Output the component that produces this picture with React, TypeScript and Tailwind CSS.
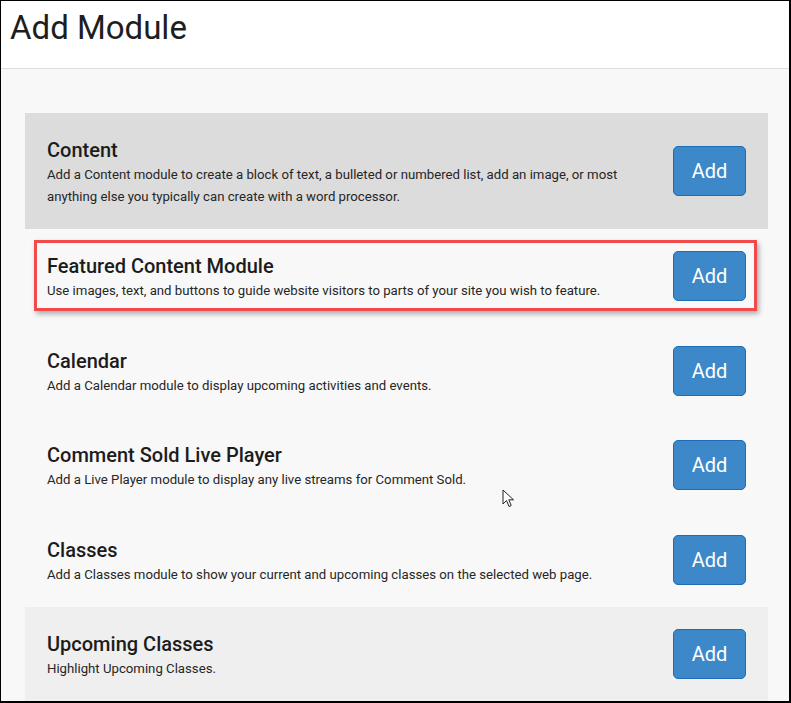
import React from "react";

type Mod = { title: string; desc: React.ReactNode; bg: string; highlight?: boolean };

const mods: Mod[] = [
  {
    title: "Content",
    desc: (
      <>
        Add a Content module to create a block of text, a bulleted or numbered list, add an image, or most
        <br />
        anything else you typically can create with a word processor.
      </>
    ),
    bg: "bg-[#dcdcdc]",
  },
  {
    title: "Featured Content Module",
    desc: "Use images, text, and buttons to guide website visitors to parts of your site you wish to feature.",
    bg: "bg-[#f8f8f8]",
    highlight: true,
  },
  { title: "Calendar", desc: "Add a Calendar module to display upcoming activities and events.", bg: "bg-[#f8f8f8]" },
  {
    title: "Comment Sold Live Player",
    desc: "Add a Live Player module to display any live streams for Comment Sold.",
    bg: "bg-[#f8f8f8]",
  },
  {
    title: "Classes",
    desc: "Add a Classes module to show your current and upcoming classes on the selected web page.",
    bg: "bg-[#f8f8f8]",
  },
  { title: "Upcoming Classes", desc: "Highlight Upcoming Classes.", bg: "bg-[#efefef]" },
];

function Cursor() {
  return (
    <svg className="absolute left-[501px] top-[488px]" width="14" height="20" viewBox="0 0 14 20">
      <path
        d="M1 1 L1 15 L4.5 11.5 L7 17.5 L9.2 16.5 L6.8 10.8 L11.5 10.8 Z"
        fill="#fff"
        stroke="#222"
        strokeWidth="1"
        strokeLinejoin="round"
      />
    </svg>
  );
}

export default function App() {
  return (
    <div
      className="relative w-[791px] h-[703px] overflow-hidden border-l border-t border-r-2 border-b-2 border-black bg-[#f8f8f8]"
      style={{ fontFamily: "Roboto, 'Noto Sans', sans-serif" }}
    >
      <div className="h-[68px] bg-white border-b border-[#dedede] pl-[9px] pt-[7px]">
        <h1 className="text-[33px] leading-[40px] font-normal text-[#1e1e1e]">Add Module</h1>
      </div>
      <div className="pl-[24px] pr-[21px] pt-[44px] flex flex-col">
        {mods.map((m, i) => (
          <div
            key={i}
            className={`relative flex items-center justify-between pl-[22px] pr-[22px] ${m.bg} ${
              i === 0 ? "h-[116px]" : "h-[94.5px]"
            }`}
          >
            {m.highlight && (
              <div className="absolute left-[9px] right-[11px] top-[11px] bottom-[13px] border-[3px] border-[#f24a4a] shadow-[2px_3px_5px_rgba(0,0,0,0.3)]" />
            )}
            <div className="relative flex flex-col pt-[2px]">
              <div className="text-[20px] leading-[28px] font-medium text-[#1c1c1c]">{m.title}</div>
              <div className="text-[13.2px] leading-[22.5px] text-[#262626]">{m.desc}</div>
            </div>
            <button className="relative w-[73px] h-[50px] rounded-[5px] bg-[#3d88c9] border border-[#1c6db5] text-white text-[20px] leading-none">
              Add
            </button>
          </div>
        ))}
      </div>
      <Cursor />
    </div>
  );
}
